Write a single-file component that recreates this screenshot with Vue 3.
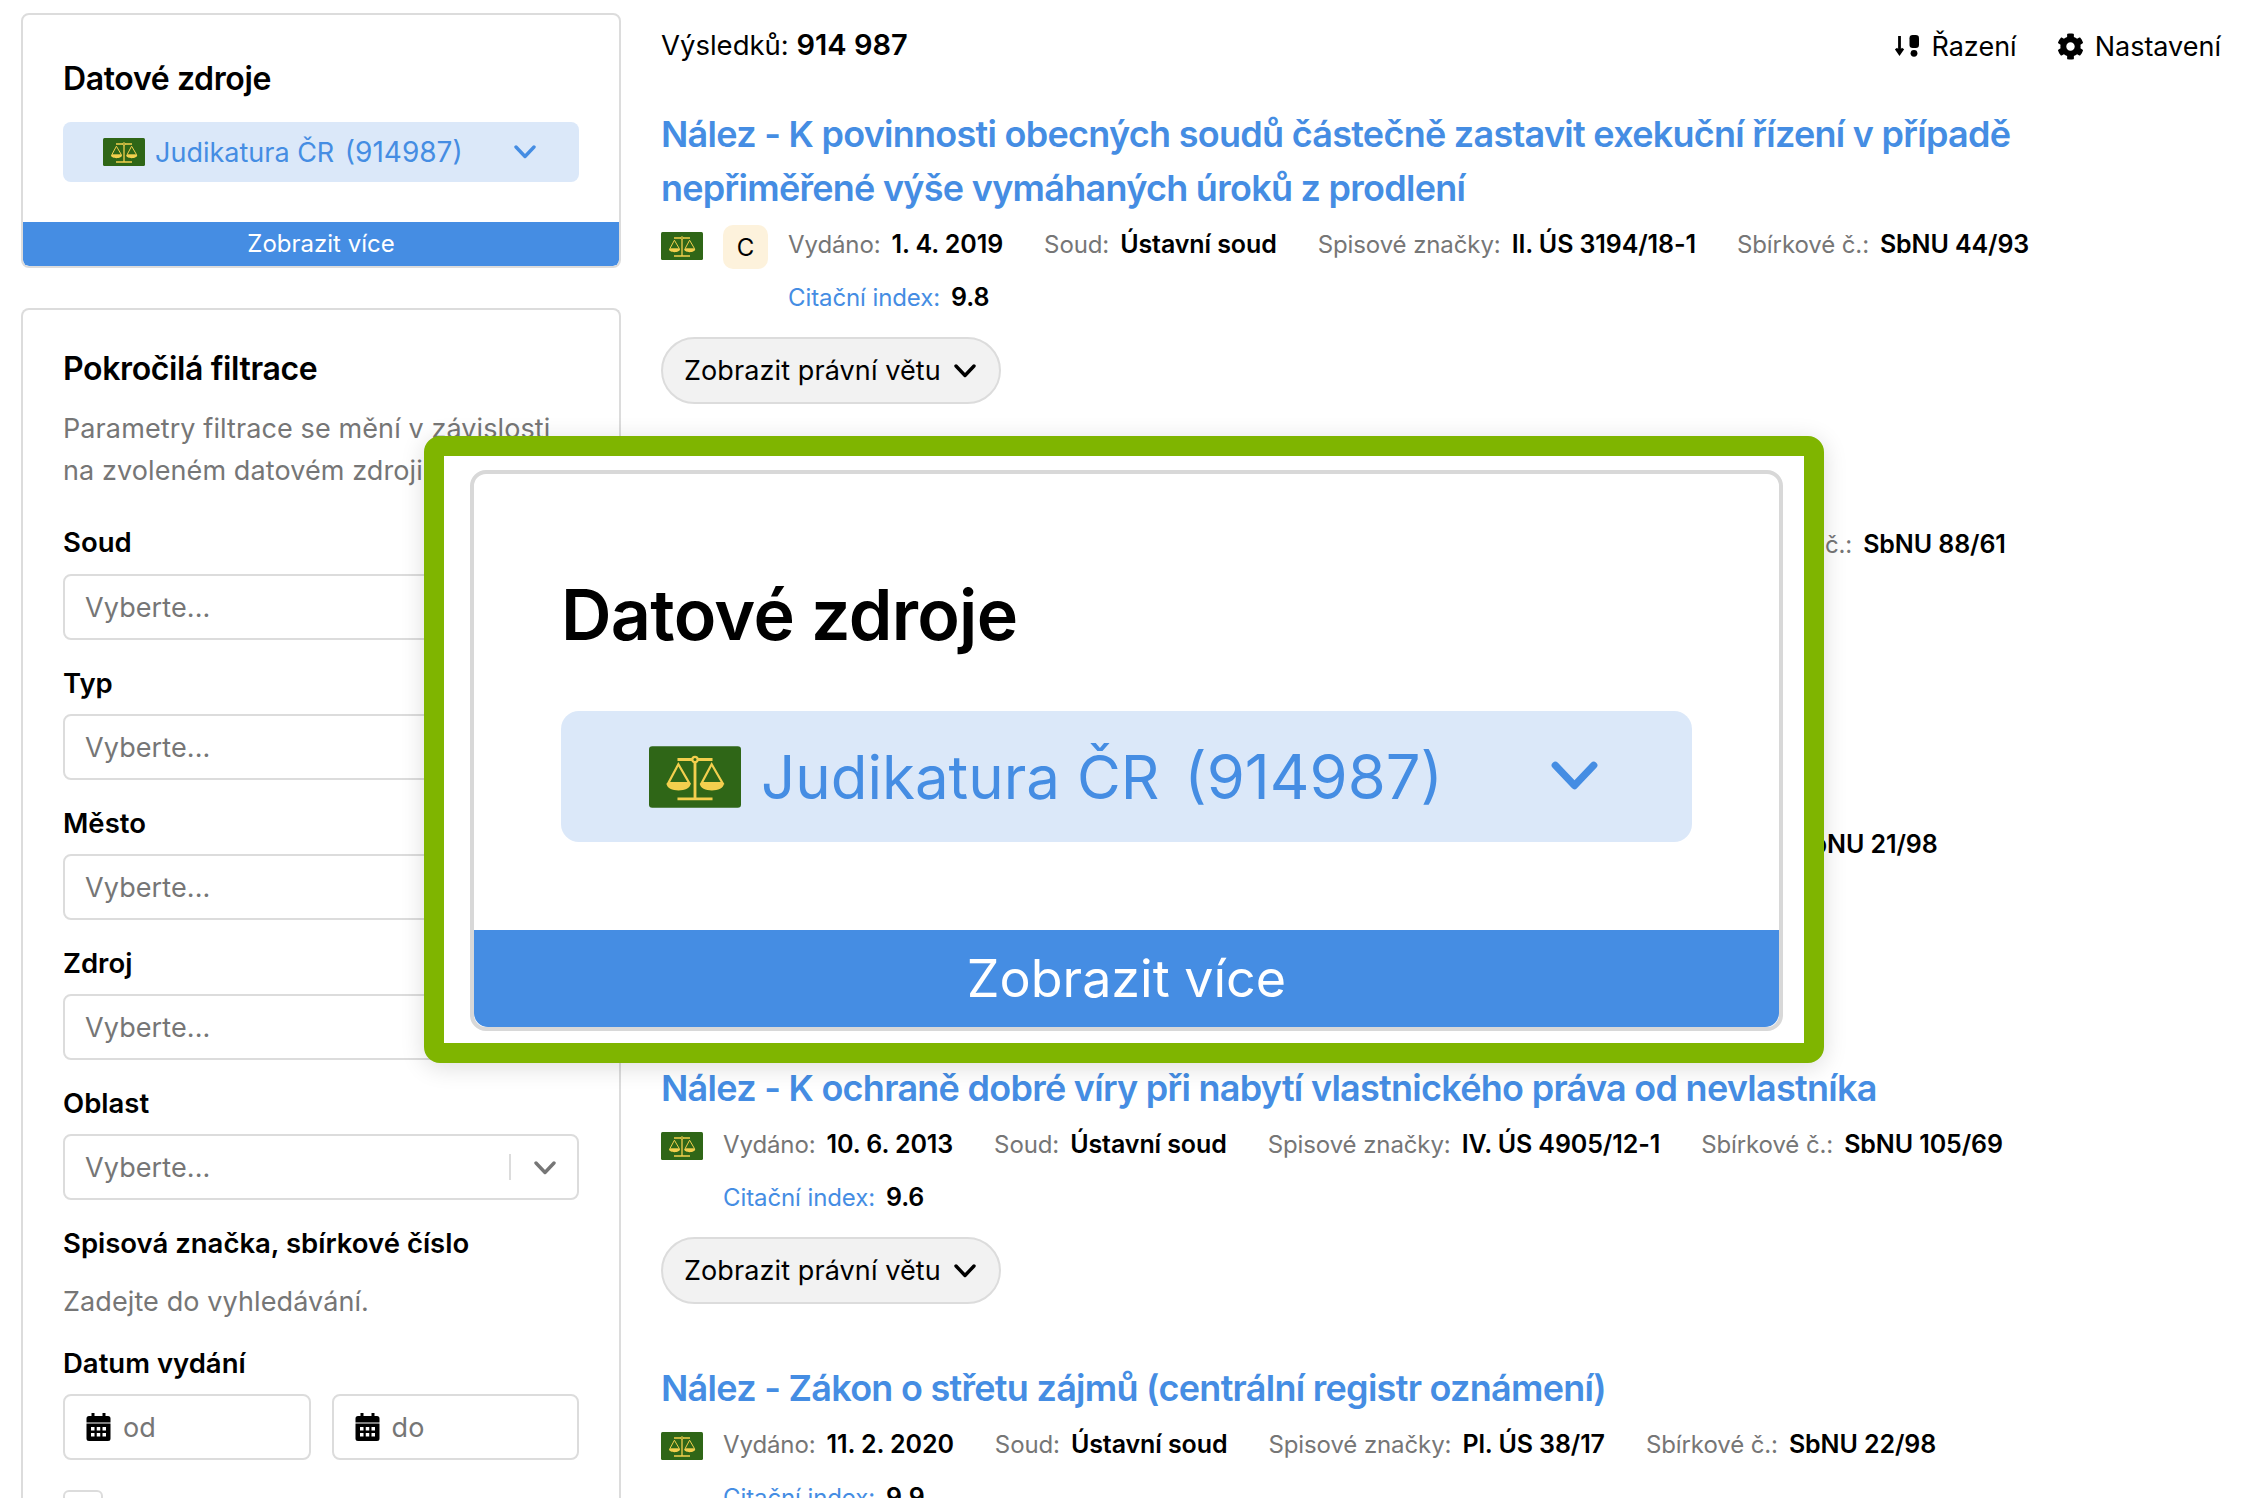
<script setup>
const filters = ['Soud', 'Typ', 'Město', 'Zdroj', 'Oblast']
const results = [
  { title: 'Nález - K povinnosti obecných soudů částečně zastavit exekuční řízení v případě nepřiměřené výše vymáhaných úroků z prodlení', badge: 'C', date: '1. 4. 2019', mark: 'II. ÚS 3194/18-1', sb: 'SbNU 44/93', cit: '9.8' },
  { title: 'Nález - K ochraně vlastnického práva', date: '22. 10. 2019', mark: 'III. ÚS 3194/18-11', sb: 'SbNU 88/61', cit: '9.7' },
  { title: 'Nález - K odpovědnosti státu za škodu', date: '5. 3. 2020', mark: 'I. ÚS 2194/18', sb: 'SbNU 21/98', cit: '9.7' },
  { title: 'Nález - K ochraně dobré víry při nabytí vlastnického práva od nevlastníka', date: '10. 6. 2013', mark: 'IV. ÚS 4905/12-1', sb: 'SbNU 105/69', cit: '9.6' },
  { title: 'Nález - Zákon o střetu zájmů (centrální registr oznámení)', date: '11. 2. 2020', mark: 'Pl. ÚS 38/17', sb: 'SbNU 22/98', cit: '9.9' }
]
</script>

<template>
  <div class="page">
    <svg class="defs" aria-hidden="true">
      <symbol id="scales" viewBox="0 0 42 28">
        <rect width="42" height="28" rx="1.5" fill="#2f6617" />
        <g fill="none" stroke="#f3cf4e" stroke-width="1">
          <path d="M13 6h16M21 7v17M13 24h16" stroke-width="1.3" />
          <circle cx="21" cy="6" r="1.2" fill="#2f6617" />
          <path d="M13.4 8.2 8.8 16.8h9.6zM28.6 8.2 24 16.8h9.6z" />
        </g>
        <path d="M8 17h11c0 4.2-11 4.2-11 0zM23.2 17h11c0 4.2-11 4.2-11 0z" fill="#f3cf4e" />
      </symbol>
      <symbol id="gear" viewBox="0 0 512 512">
        <path fill="currentColor" d="M487.4 315.7l-42.6-24.6c4.3-23.2 4.3-47 0-70.2l42.6-24.6c4.9-2.8 7.1-8.6 5.5-14-11.1-35.6-30-67.8-54.7-94.6-3.8-4.1-10-5.1-14.8-2.3L380.8 110c-17.9-15.4-38.5-27.3-60.8-35.1V25.8c0-5.6-3.9-10.5-9.4-11.7-36.7-8.2-74.3-7.8-109.2 0-5.5 1.2-9.4 6.1-9.4 11.7V75c-22.2 7.9-42.8 19.8-60.8 35.1L88.7 85.5c-4.9-2.8-11-1.9-14.8 2.3-24.7 26.7-43.6 58.9-54.7 94.6-1.7 5.4.6 11.2 5.5 14L67.3 221c-4.3 23.2-4.3 47 0 70.2l-42.6 24.6c-4.9 2.8-7.1 8.6-5.5 14 11.1 35.6 30 67.8 54.7 94.6 3.8 4.1 10 5.1 14.8 2.3l42.6-24.6c17.9 15.4 38.5 27.3 60.8 35.1v49.2c0 5.6 3.9 10.5 9.4 11.7 36.7 8.2 74.3 7.8 109.2 0 5.5-1.2 9.4-6.1 9.4-11.7v-49.2c22.2-7.9 42.8-19.8 60.8-35.1l42.6 24.6c4.9 2.8 11 1.9 14.8-2.3 24.7-26.7 43.6-58.9 54.7-94.6 1.5-5.5-.7-11.3-5.6-14.1zM256 336c-44.1 0-80-35.9-80-80s35.9-80 80-80 80 35.9 80 80-35.9 80-80 80z" />
      </symbol>
      <symbol id="cal" viewBox="0 0 24 28">
        <path fill="currentColor" fill-rule="evenodd" d="M5 0h3v3h8V0h3v3h2.500A2.500 2.500 0 0 1 24 5.500V9.500H0V5.500A2.500 2.500 0 0 1 2.500 3H5zM0 10.500h24v15a2.500 2.500 0 0 1-2.500 2.500h-19A2.500 2.500 0 0 1 0 25.500zM4.500 14v3.500h3.500V14zm5.750 0v3.500h3.500V14zm5.750 0v3.500h3.500V14zM4.500 20v3.500h3.500V20zm5.750 0v3.500h3.500V20zm5.750 0v3.500h3.500V20z" />
      </symbol>
      <symbol id="chev" viewBox="0 0 22 14">
        <path d="M2 2l9 9.500L20 2" fill="none" stroke="currentColor" stroke-width="3.400" stroke-linecap="round" stroke-linejoin="round" />
      </symbol>
    </svg>

    <aside class="side">
      <section class="card source">
        <h2>Datové zdroje</h2>
        <div class="source-select">
          <svg class="flag"><use href="#scales" /></svg>
          <span class="source-name">Judikatura ČR <span class="source-num">(914987)</span></span>
          <svg class="source-chev"><use href="#chev" /></svg>
        </div>
        <div class="more">Zobrazit více</div>
      </section>

      <section class="card filter">
        <h2>Pokročilá filtrace</h2>
        <p class="hint">Parametry filtrace se mění v závislosti na zvoleném datovém zdroji</p>
        <div v-for="f in filters" :key="f" class="field">
          <label>{{ f }}</label>
          <div class="input">
            <span class="ph">Vyberte...</span>
            <i class="sep"></i>
            <svg class="input-chev"><use href="#chev" /></svg>
          </div>
        </div>
        <label class="lab-file">Spisová značka, sbírkové číslo</label>
        <p class="enter">Zadejte do vyhledávání.</p>
        <label class="lab-date">Datum vydání</label>
        <div class="dates">
          <div class="input date"><svg class="cal"><use href="#cal" /></svg><span class="ph">od</span></div>
          <div class="input date"><svg class="cal"><use href="#cal" /></svg><span class="ph">do</span></div>
        </div>
        <div class="check"></div>
      </section>
    </aside>

    <main class="main">
      <header class="top">
        <div class="count">Výsledků: <b>914 987</b></div>
        <div class="tools">
          <span class="tool">
            <svg class="sort" viewBox="0 -1 25 22"><path d="M4.500 0v17M1 12.500l3.500 5 3.500-5" fill="none" stroke="#000" stroke-width="2.800" /><rect x="14.500" y="-1" width="9.500" height="13" rx="3.200" /><circle cx="19" cy="17.300" r="3.400" /></svg>
            Řazení
          </span>
          <span class="tool"><svg class="gear"><use href="#gear" /></svg>Nastavení</span>
        </div>
      </header>

      <article v-for="r in results" :key="r.mark" class="result">
        <h3>{{ r.title }}</h3>
        <div class="meta">
          <svg class="mini"><use href="#scales" /></svg>
          <span v-if="r.badge" class="badge">{{ r.badge }}</span>
          <div class="meta-col">
            <div class="meta-row">
              <span><em>Vydáno:</em><b>{{ r.date }}</b></span>
              <span><em>Soud:</em><b>Ústavní soud</b></span>
              <span><em>Spisové značky:</em><b>{{ r.mark }}</b></span>
              <span><em>Sbírkové č.:</em><b>{{ r.sb }}</b></span>
            </div>
            <div class="cit"><em>Citační index:</em><b>{{ r.cit }}</b></div>
          </div>
        </div>
        <button class="legal">Zobrazit právní větu <svg class="legal-chev"><use href="#chev" /></svg></button>
      </article>
    </main>

    <div class="zoom">
      <section class="zcard">
        <h2>Datové zdroje</h2>
        <div class="zselect">
          <svg class="zflag"><use href="#scales" /></svg>
          <span class="zname">Judikatura ČR <span class="znum">(914987)</span></span>
          <svg class="zchev"><use href="#chev" /></svg>
        </div>
        <div class="zmore">Zobrazit více</div>
      </section>
    </div>
  </div>
</template>

<style>
html, body { margin: 0; background: #fff; overflow: hidden; }
</style>

<style scoped>
.page {
  position: relative;
  width: 2248px;
  height: 1498px;
  overflow: hidden;
  display: flex;
  gap: 40px;
  padding: 13px 0 0 21px;
  box-sizing: border-box;
  font-family: Inter, "Noto Sans", sans-serif;
  color: #000;
  background: #fff;
}
.defs { position: absolute; width: 0; height: 0; }
.side { width: 600px; flex: none; display: flex; flex-direction: column; gap: 40px; }
.card {
  border: 2px solid #dcdcdc;
  border-radius: 8px;
  box-sizing: border-box;
  background: #fff;
}
.card h2 { margin: 0; font-size: 32px; font-weight: 600; line-height: 40px; letter-spacing: -0.37px; }
.source { flex: none; height: 255px; padding: 44px 0 0; position: relative; overflow: hidden; }
.source h2 { margin-left: 40px; }
.source-select {
  margin: 23px 40px 0;
  height: 60px;
  background: #dbe8f9;
  border-radius: 8px;
  display: flex;
  align-items: center;
  padding-left: 40px;
  color: #458de3;
  position: relative;
}
.flag { width: 42px; height: 28px; flex: none; }
.source-name { margin-left: 10px; font-size: 27px; white-space: nowrap; }
.source-num { font-size: 28px; margin-left: 3px; }
.source-chev { position: absolute; left: 451px; top: 23px; width: 22px; height: 14px; }
.more {
  position: absolute; left: 0; right: 0; bottom: 0;
  height: 44px; line-height: 44px; text-align: center;
  background: #458de3; color: #fff; font-size: 24px;
  border-radius: 0 0 6px 6px;
}
.filter { padding: 39px 40px 0; flex: 1; border-bottom: none; border-radius: 8px 8px 0 0; }
.hint { margin: 19px 0 0; font-size: 27px; letter-spacing: 0.1px; line-height: 42px; color: #767676; width: 516px; }
.field label, .lab-file, .lab-date {
  display: block; font-size: 27.500px; font-weight: 600; line-height: 40px;
}
.field label { line-height: 54px; padding-top: 16px; box-sizing: content-box; height: 58px; }
.field:first-of-type label { padding-top: 0; height: 40px; margin-top: 30px; margin-bottom: 12px; line-height: 40px; }
.input {
  height: 66px; border: 2px solid #dcdcdc; border-radius: 8px; box-sizing: border-box;
  display: flex; align-items: center; padding-left: 20px; position: relative; background: #fff;
}
.ph { color: #767676; font-size: 27px; letter-spacing: 0.1px; }
.sep { position: absolute; right: 66px; top: 18px; bottom: 18px; width: 2px; background: #dcdcdc; }
.input-chev { position: absolute; right: 21px; top: 25px; width: 22px; height: 14px; color: #767676; }
.lab-file { margin-top: 23px; }
.enter { margin: 19px 0 0; font-size: 27px; letter-spacing: 0.1px; line-height: 40px; color: #767676; }
.lab-date { margin-top: 21px; }
.dates { display: flex; gap: 21px; margin-top: 11px; }
.date { flex: 1; gap: 12px; padding-left: 21px; }
.cal { width: 25px; height: 28px; flex: none; }
.check { width: 40px; height: 40px; border: 2px solid #dcdcdc; border-radius: 6px; box-sizing: border-box; margin-top: 30px; }

.main { flex: 1; }
.top { display: flex; justify-content: space-between; align-items: center; height: 59px; padding-right: 27px; }
.count { font-size: 27.500px; margin-top: 4px; }
.count b { font-weight: 600; font-size: 29px; }
.tools { display: flex; gap: 40px; font-size: 27px; margin-top: 7px; }
.tool { display: flex; align-items: center; gap: 11px; }
.sort { width: 25px; height: 22px; margin-left: 2px; }
.gear { width: 27px; height: 27px; }
.result { height: 300px; padding-top: 35px; box-sizing: border-box; }
.result:nth-of-type(1) { height: 354px; }
.result h3 {
  margin: 0; font-size: 36px; line-height: 54px; font-weight: 600; color: #458de3;
  width: 1400px; letter-spacing: -0.73px;
}
.meta { display: flex; align-items: flex-start; margin-top: 10px; min-height: 86px; }
.mini { width: 42px; height: 28px; flex: none; margin: 7px 20px 0 0; }
.badge {
  width: 45px; height: 44px; flex: none; border-radius: 10px; background: #fdf2dc;
  display: flex; align-items: center; justify-content: center; font-size: 24px; margin: 0 20px 0 0;
}
.meta-row { display: flex; gap: 41px; line-height: 38px; white-space: nowrap; font-size: 24px; }
.meta-col em, .cit em { font-style: normal; color: #767676; margin-right: 11px; letter-spacing: -0.1px; }
.meta-col b { font-weight: 600; font-size: 25px; letter-spacing: -0.1px; }
.cit { font-size: 24px; line-height: 40px; margin-top: 13px; }
.cit em { color: #458de3; }
.legal {
  display: flex; align-items: center; gap: 13px;
  margin-top: 19px; height: 67px; width: 340px; border: 2px solid #dcdcdc; border-radius: 34px;
  background: #f2f2f2; font: 27px Inter, "Noto Sans", sans-serif; letter-spacing: 0.1px; color: #000; padding: 0 0 0 21px; white-space: nowrap;
}
.legal-chev { width: 22px; height: 14px; flex: none; }

.zoom {
  position: absolute; left: 424px; top: 436px; width: 1400px; height: 627px;
  box-sizing: border-box; border: 20px solid #7fb500; border-radius: 16px; background: #fff;
  box-shadow: 0 4px 24px rgba(0, 0, 0, 0.14);
  padding: 14px 21px 12px 26px; overflow: visible;
}
.zcard {
  border: 4px solid #d8d8d8; border-radius: 16px; box-sizing: border-box; height: 100%;
  position: relative; overflow: hidden; background: #fff; padding: 0 87px;
}
.zcard h2 { margin: 0; padding-top: 97px; font-size: 70px; line-height: 88px; font-weight: 600; letter-spacing: -0.7px; }
.zselect {
  margin-top: 52px; height: 131px; background: #dbe8f9; border-radius: 18px; position: relative;
  display: flex; align-items: center; padding-left: 88px; color: #458de3;
}
.zflag { width: 92px; height: 62px; flex: none; }
.zname { margin-left: 20px; font-size: 60px; white-space: nowrap; }
.znum { font-size: 61.500px; margin-left: 8px; }
.zchev { position: absolute; left: 990px; top: 50px; width: 47px; height: 30px; }
.zmore {
  position: absolute; left: 0; right: 0; bottom: 0; height: 97px; line-height: 97px;
  text-align: center; background: #458de3; color: #fff; font-size: 52px; border-radius: 0 0 14px 14px;
}
</style>
